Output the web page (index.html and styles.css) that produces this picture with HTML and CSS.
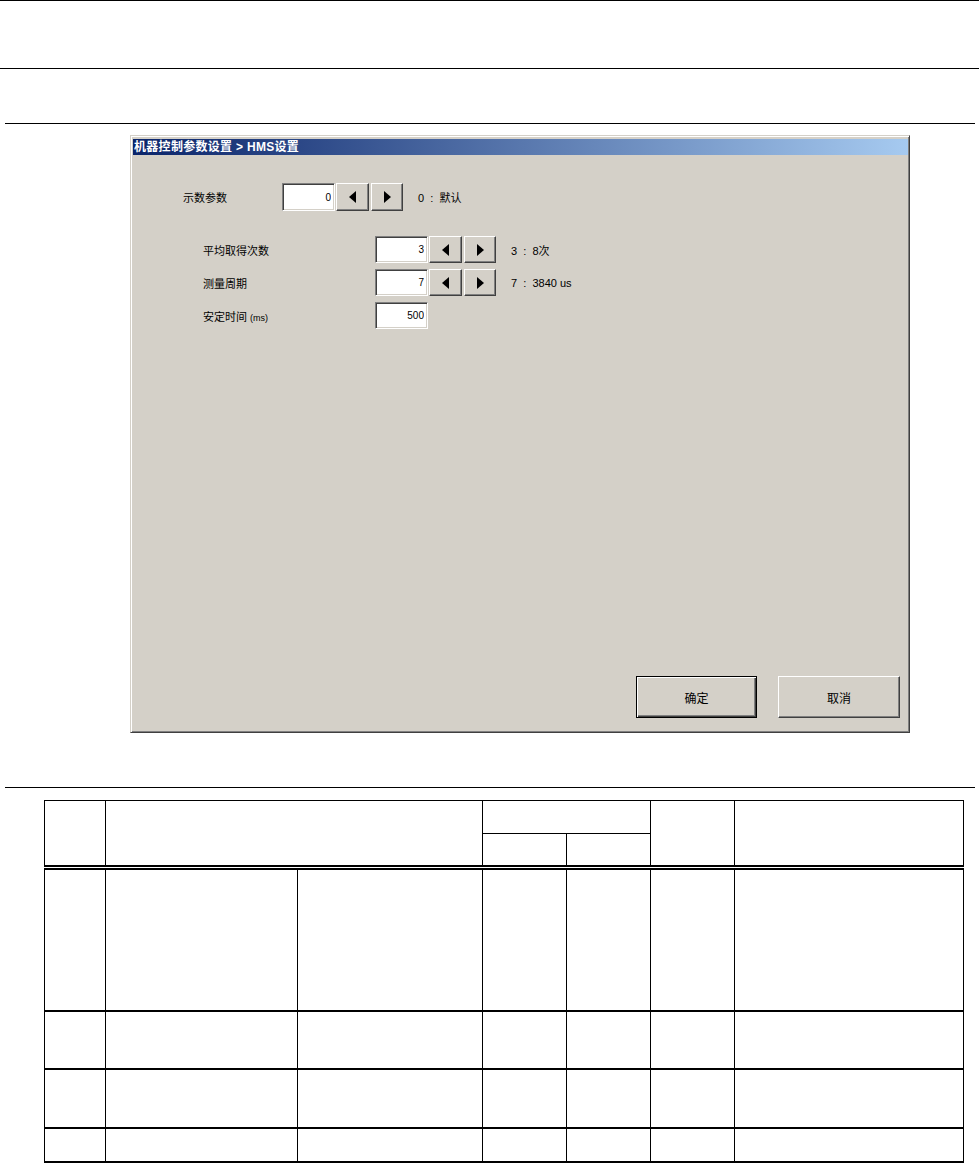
FILE: index.html
```html
<!DOCTYPE HTML>
<html>
  <head>
    <meta charset="UTF-8">
    <title>HMS设置</title>
    <link rel="stylesheet" href="styles.css">
  </head>

  <body>
    <div class="rule"></div>
    <div class="rule mid"></div>
    <div class="rule inset first"></div>

    <div class="dialog">
      <div class="titlebar">机器控制参数设置 &gt; HMS设置</div>
      <div class="client">

        <div class="row top">
          <span class="label">示数参数</span>
          <input type="text" class="field" value="0" readonly>
          <button type="button" class="spin"><svg width="8" height="12" viewBox="0 0 8 12"><polygon points="7,0 7,12 0,6" fill="#000"/></svg></button>
          <button type="button" class="spin right"><svg width="8" height="12" viewBox="0 0 8 12"><polygon points="1,0 1,12 8,6" fill="#000"/></svg></button>
          <span class="note">0&nbsp; :&nbsp; 默认</span>
        </div>

        <div class="group">
          <div class="row sub">
            <span class="label">平均取得次数</span>
            <input type="text" class="field" value="3" readonly>
            <button type="button" class="spin"><svg width="8" height="12" viewBox="0 0 8 12"><polygon points="7,0 7,12 0,6" fill="#000"/></svg></button>
            <button type="button" class="spin right"><svg width="8" height="12" viewBox="0 0 8 12"><polygon points="1,0 1,12 8,6" fill="#000"/></svg></button>
            <span class="note">3&nbsp; :&nbsp; 8次</span>
          </div>
          <div class="row sub">
            <span class="label">测量周期</span>
            <input type="text" class="field" value="7" readonly>
            <button type="button" class="spin"><svg width="8" height="12" viewBox="0 0 8 12"><polygon points="7,0 7,12 0,6" fill="#000"/></svg></button>
            <button type="button" class="spin right"><svg width="8" height="12" viewBox="0 0 8 12"><polygon points="1,0 1,12 8,6" fill="#000"/></svg></button>
            <span class="note">7&nbsp; :&nbsp; 3840 us</span>
          </div>
          <div class="row sub">
            <span class="label">安定时间 <small>(ms)</small></span>
            <input type="text" class="field" value="500" readonly>
          </div>
        </div>

        <div class="buttons">
          <button type="button" class="push default">确定</button>
          <button type="button" class="push">取消</button>
        </div>
      </div>
    </div>

    <div class="rule inset second"></div>

    <table class="grid">
      <colgroup>
        <col style="width:61px">
        <col style="width:192px">
        <col style="width:185px">
        <col style="width:84px">
        <col style="width:84px">
        <col style="width:84px">
        <col style="width:229px">
      </colgroup>
      <tr class="h1">
        <th rowspan="2"></th>
        <th rowspan="2" colspan="2"></th>
        <th colspan="2"></th>
        <th rowspan="2"></th>
        <th rowspan="2"></th>
      </tr>
      <tr class="h2">
        <th></th>
        <th></th>
      </tr>
      <tr class="r1">
        <td></td><td></td><td></td><td></td><td></td><td></td><td></td>
      </tr>
      <tr class="r2">
        <td></td><td></td><td></td><td></td><td></td><td></td><td></td>
      </tr>
      <tr class="r3">
        <td></td><td></td><td></td><td></td><td></td><td></td><td></td>
      </tr>
      <tr class="r4">
        <td></td><td></td><td></td><td></td><td></td><td></td><td></td>
      </tr>
    </table>
  </body>
</html>
```

FILE: styles.css
```css
body {
  margin: 0;
  background: #ffffff;
  font-family: "Liberation Sans", "Noto Sans CJK SC", sans-serif;
  font-size: 11px;
  color: #000000;
}

.rule {
  height: 1px;
  background: #000000;
}

.mid {
  margin-top: 67px;
}

.inset {
  margin-left: 5px;
  width: 970px;
}

.first {
  margin-top: 54px;
}

.second {
  margin-top: 54px;
}

/* ventana estilo windows clasico */
.dialog {
  margin-top: 11px;
  margin-left: 130px;
  width: 780px;
  height: 598px;
  box-sizing: border-box;
  background: #d4d0c8;
  border-top: 1px solid #d4d0c8;
  border-left: 1px solid #d4d0c8;
  border-right: 1px solid #404040;
  border-bottom: 1px solid #404040;
  box-shadow: inset 1px 1px #ffffff, inset -1px -1px #808080;
  padding: 3px 1px 1px 2px;
  display: flex;
  flex-direction: column;
}

.titlebar {
  height: 16px;
  line-height: 16px;
  padding-left: 1px;
  font-size: 12px;
  font-weight: bold;
  letter-spacing: 0.3px;
  color: #ffffff;
  white-space: nowrap;
  background: linear-gradient(to right, #0a246a, #a6caf0);
}

.client {
  flex: 1;
  display: flex;
  flex-direction: column;
}

.row {
  display: flex;
  align-items: center;
}

.top {
  margin-top: 28px;
  padding-left: 50px;
  height: 28px;
}

.top .label {
  width: 99px;
}

.group {
  margin-top: 25px;
  display: flex;
  flex-direction: column;
  gap: 6px;
}

.sub {
  padding-left: 70px;
  height: 27px;
}

.sub .label {
  width: 172px;
}

.label small {
  font-size: 9px;
}

.field {
  box-sizing: border-box;
  width: 53px;
  height: 100%;
  margin: 0;
  padding: 0 3px 0 0;
  text-align: right;
  font-family: "Liberation Sans", sans-serif;
  font-size: 10px;
  background: #ffffff;
  border-top: 1px solid #808080;
  border-left: 1px solid #808080;
  border-right: 1px solid #ffffff;
  border-bottom: 1px solid #ffffff;
  box-shadow: inset 1px 1px #404040, inset -1px -1px #d4d0c8;
  outline: none;
}

.spin {
  box-sizing: border-box;
  width: 33px;
  height: 100%;
  margin: 0 0 0 1px;
  padding: 0;
  background: #d4d0c8;
  border-top: 1px solid #ffffff;
  border-left: 1px solid #ffffff;
  border-right: 1px solid #404040;
  border-bottom: 1px solid #404040;
  box-shadow: inset -1px -1px #808080;
  display: flex;
  align-items: center;
  justify-content: center;
}

.spin.right {
  width: 32px;
  margin-left: 2px;
}

.note {
  margin-left: 15px;
  white-space: nowrap;
}

.buttons {
  margin-top: auto;
  margin-bottom: 13px;
  margin-right: 8px;
  display: flex;
  justify-content: flex-end;
  gap: 21px;
}

.push {
  box-sizing: border-box;
  width: 122px;
  height: 42px;
  margin: 0;
  background: #d4d0c8;
  font-family: "Liberation Sans", "Noto Sans CJK SC", sans-serif;
  font-size: 12px;
  color: #000000;
  border-top: 1px solid #ffffff;
  border-left: 1px solid #ffffff;
  border-right: 1px solid #404040;
  border-bottom: 1px solid #404040;
  box-shadow: inset -1px -1px #808080;
}

.push.default {
  width: 121px;
  border: 1px solid #000000;
  box-shadow: inset 1px 1px #ffffff, inset -1px -1px #404040, inset -2px -2px #808080;
}

/* tabla de abajo */
.grid {
  margin-top: 12px;
  margin-left: 44px;
  width: 920px;
  border-collapse: collapse;
  table-layout: fixed;
}

.grid th,
.grid td {
  border: 1px solid #000000;
  padding: 0;
}

.h1 th {
  height: 32px;
}

.h2 th {
  height: 31px;
  border-bottom: 5px double #000000;
}

.h1 th[rowspan] {
  border-bottom: 5px double #000000;
}

.r1 td {
  height: 140px;
}

.r2 td {
  height: 56px;
  border-top: 2px solid #000000;
}

.r3 td {
  height: 57px;
  border-top: 2px solid #000000;
}

.r4 td {
  height: 32px;
  border-top: 2px solid #000000;
  border-bottom: 2px solid #000000;
}
```
